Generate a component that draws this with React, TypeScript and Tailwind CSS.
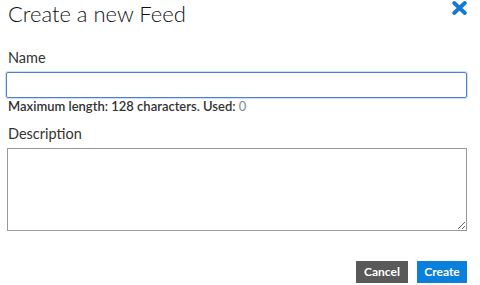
import { useState } from "react";

const CloseIcon = () => (
  <svg width="15" height="14" viewBox="0 0 15 14" aria-hidden="true">
    <path
      d="M2.2 2 L12.8 12 M12.8 2 L2.2 12"
      stroke="#1279d6"
      strokeWidth="3.8"
      strokeLinecap="round"
    />
  </svg>
);

export default function App() {
  const [name, setName] = useState("");
  const [description, setDescription] = useState("");

  return (
    <div
      className="h-[285px] w-[480px] bg-white pl-[6px] pr-[13px] text-[#222]"
      style={{ fontFamily: "Lato, 'Open Sans', Arial, sans-serif" }}
    >
      <header className="flex items-start justify-between">
        <h1 className="pl-[2px] text-[22px] font-light leading-[28px] text-[#111]">
          Create a new Feed
        </h1>
        <button type="button" className="mt-[1px]">
          <CloseIcon />
        </button>
      </header>

      <div className="mt-[20px] flex flex-col">
        <label className="pl-[2px] text-[14.5px] leading-[20px] text-[#333]">Name</label>
        <div className="mt-[4px] h-[26px] rounded-[2px] border border-[#4a7fd1] shadow-[0_0_0_1px_rgba(74,127,209,0.25)]">
          <input
            autoFocus
            value={name}
            onChange={(e) => setName(e.target.value)}
            className="h-full w-full px-[5px] text-[14px] outline-none"
          />
        </div>
        <div className="pl-[2px] text-[13px] font-semibold leading-[16px] text-[#333]">
          Maximum length: 128 characters. Used: <span className="font-normal text-[#888]">0</span>
        </div>
      </div>

      <div className="mt-[10px] flex flex-col">
        <label className="pl-[2px] text-[14.5px] leading-[20px] text-[#333]">Description</label>
        <textarea
          value={description}
          onChange={(e) => setDescription(e.target.value)}
          className="mt-[4px] ml-[1px] h-[83px] w-[460px] border border-[#999] px-[5px] py-[3px] text-[14px] outline-none"
        />
      </div>

      <div className="mt-[30px] flex justify-end gap-[9px]">
        <button
          type="button"
          className="h-[22px] w-[52px] bg-[#595959] text-[12px] font-bold text-white"
        >
          Cancel
        </button>
        <button
          type="button"
          className="h-[22px] w-[50px] bg-[#0a7fdb] text-[12px] font-bold text-white"
        >
          Create
        </button>
      </div>
    </div>
  );
}
